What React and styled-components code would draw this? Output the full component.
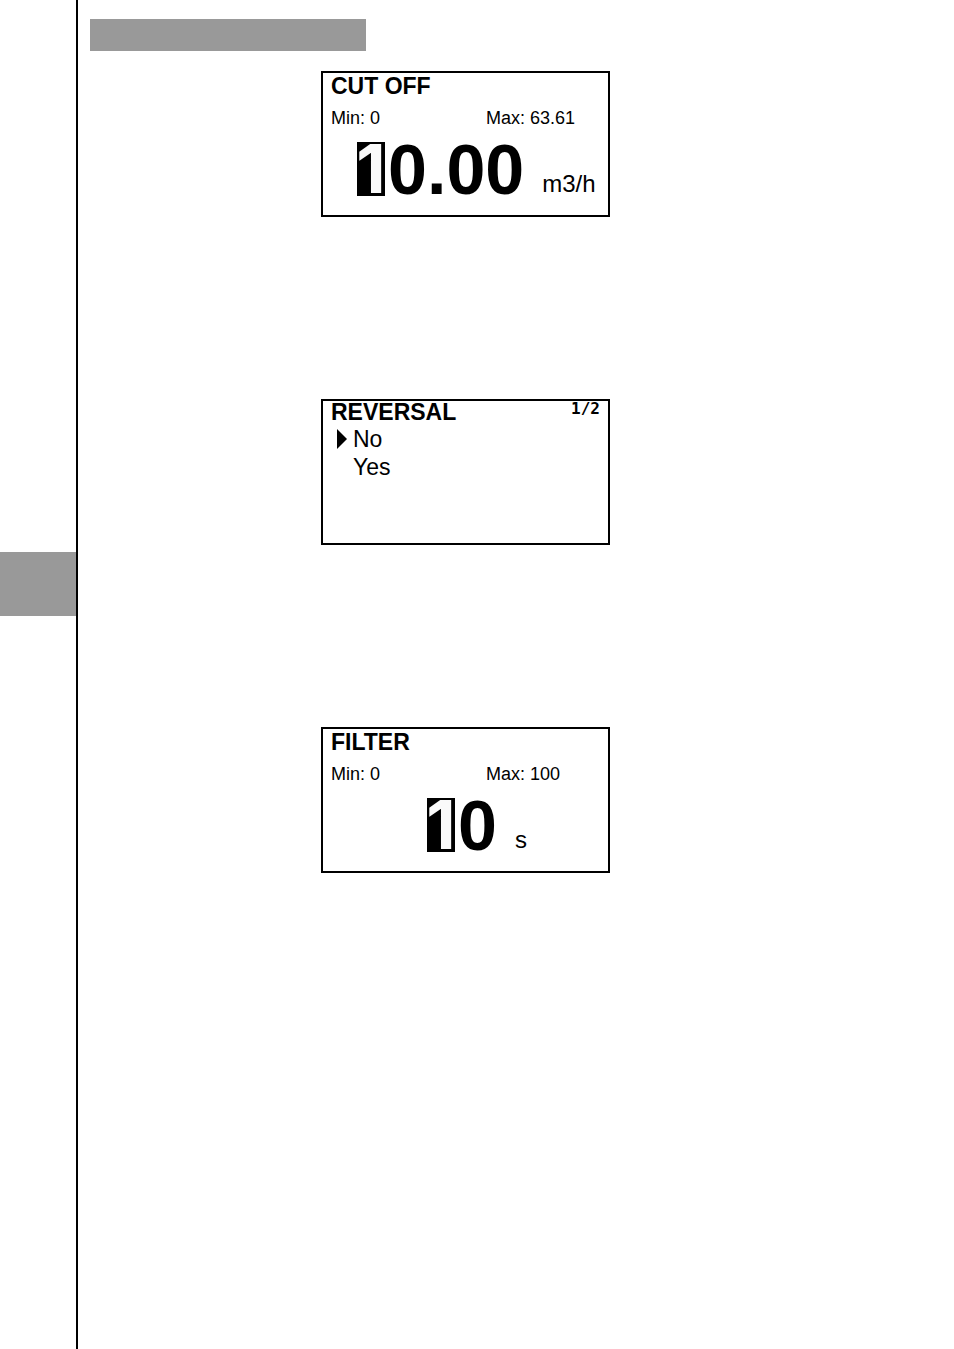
import React from "react";
import styled, { createGlobalStyle } from "styled-components";

const GlobalStyle = createGlobalStyle`
  * { box-sizing: border-box; }
  body {
    margin: 0;
    background: #fff;
    color: #000;
    font-family: "Liberation Sans", Arial, sans-serif;
  }
`;

const Page = styled.div`
  display: flex;
  min-height: 100vh;
`;

const Rail = styled.aside`
  flex: none;
  width: 78px;
  padding-top: 552px;
  border-right: 2px solid #000;
`;

const ChapterTab = styled.div`
  height: 64px;
  background: #999;
`;

const Main = styled.main`
  flex: 1;
  min-width: 0;
  padding: 19px 12px;
`;

const HeaderBar = styled.header`
  width: 276px;
  max-width: 100%;
  height: 32px;
  background: #999;
`;

const Screens = styled.div`
  display: flex;
  flex-direction: column;
  gap: 182px;
  padding: 20px 0 0 231px;
`;

const Screen = styled.section`
  width: 289px;
  min-height: 146px;
  padding: 0 8px;
  border: 2px solid #000;
`;

const ScreenHead = styled.div`
  display: flex;
  justify-content: space-between;
`;

const Title = styled.h2`
  margin: 0;
  font-size: 23px;
  line-height: ${(p) => (p.$tight ? 22 : 26)}px;
`;

const PageCount = styled.span`
  font: bold 16px/16px "DejaVu Sans Mono", monospace;
`;

const Range = styled.div`
  display: grid;
  grid-template-columns: 155px 1fr;
  margin-top: 9px;
  font-size: 18px;
  line-height: 20px;
`;

const Reading = styled.div`
  display: flex;
  align-items: flex-start;
  margin-top: 14px;
  padding-left: ${(p) => p.$indent}px;
  font-size: 70px;
  font-weight: bold;
  line-height: 56px;
`;

const Cursor = styled.span`
  display: flex;
  justify-content: center;
  width: 28px;
  height: 54px;
  margin-right: 3px;
  background: #000;
  color: #fafafa;
  font-family: Inter, sans-serif;
  font-size: 68px;
  line-height: 52px;
`;

const Unit = styled.span`
  align-self: flex-end;
  margin-left: 18px;
  font-size: 24px;
  font-weight: normal;
  line-height: 28px;
`;

const Options = styled.ul`
  margin: 2px 0 0;
  padding: 0;
  list-style: none;
`;

const Option = styled.button`
  display: flex;
  align-items: center;
  gap: 6px;
  padding: 0 0 0 6px;
  border: 0;
  background: none;
  color: inherit;
  font: 23px/28px "Liberation Sans", Arial, sans-serif;
  cursor: pointer;
`;

const Pointer = styled.svg`
  width: 10px;
  height: 20px;
  visibility: ${(p) => (p.$shown ? "visible" : "hidden")};
`;

function ValueScreen({ title, min, max, digit, rest, unit, indent }) {
  return (
    <Screen>
      <Title>{title}</Title>
      <Range>
        <span>Min: {min}</span>
        <span>Max: {max}</span>
      </Range>
      <Reading $indent={indent}>
        <Cursor>{digit}</Cursor>
        <span>{rest}</span>
        <Unit>{unit}</Unit>
      </Reading>
    </Screen>
  );
}

function ChoiceScreen({ title, count, options, selected }) {
  return (
    <Screen>
      <ScreenHead>
        <Title $tight>{title}</Title>
        <PageCount>{count}</PageCount>
      </ScreenHead>
      <Options>
        {options.map((name) => (
          <li key={name}>
            <Option type="button" aria-pressed={name === selected}>
              <Pointer
                viewBox="0 0 10 20"
                aria-hidden="true"
                $shown={name === selected}
              >
                <path d="M0 0L10 10L0 20Z" />
              </Pointer>
              {name}
            </Option>
          </li>
        ))}
      </Options>
    </Screen>
  );
}

export default function App() {
  return (
    <>
      <GlobalStyle />
      <Page>
        <Rail>
          <ChapterTab />
        </Rail>
        <Main>
          <HeaderBar />
          <Screens>
            <ValueScreen
              title="CUT OFF"
              min="0"
              max="63.61"
              digit="1"
              rest="0.00"
              unit="m3/h"
              indent={26}
            />
            <ChoiceScreen
              title="REVERSAL"
              count="1/2"
              options={["No", "Yes"]}
              selected="No"
            />
            <ValueScreen
              title="FILTER"
              min="0"
              max="100"
              digit="1"
              rest="0"
              unit="s"
              indent={96}
            />
          </Screens>
        </Main>
      </Page>
    </>
  );
}
